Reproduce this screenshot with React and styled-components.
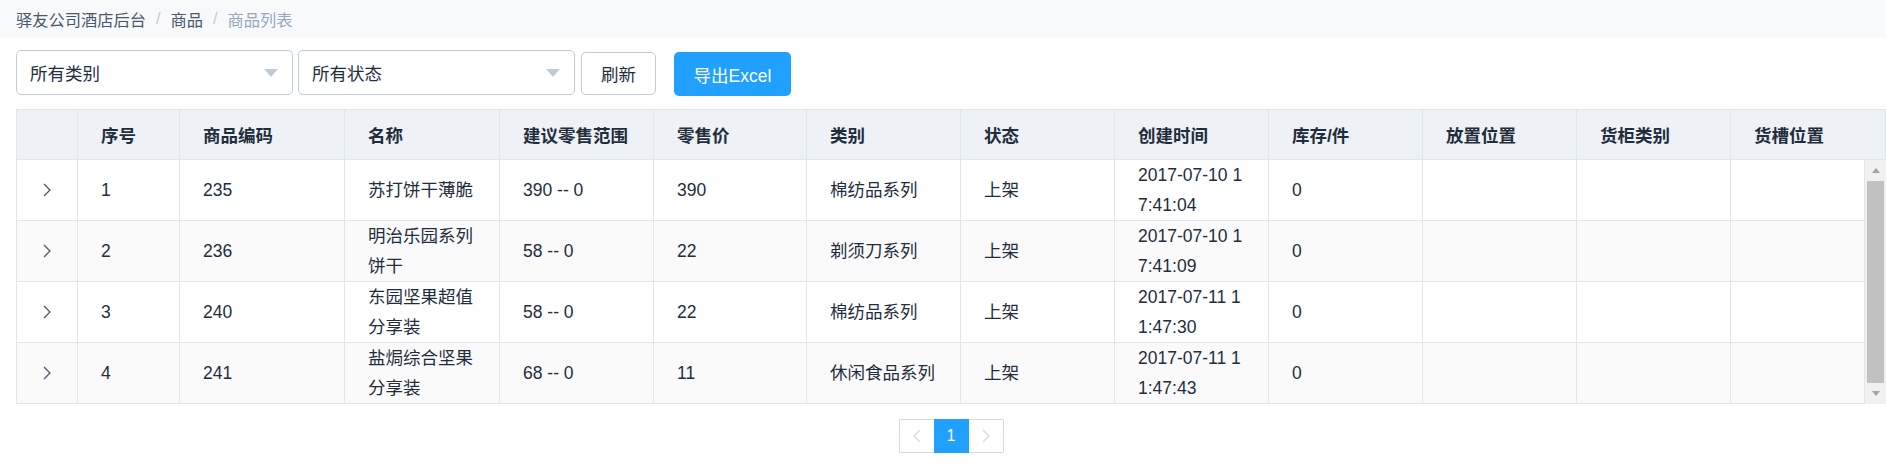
import React from "react";
import styled, { createGlobalStyle } from "styled-components";

const GlobalStyle = createGlobalStyle`
  html, body {
    margin: 0;
    padding: 0;
    background: #fff;
  }
  body {
    font-family: "Liberation Sans", "Noto Sans CJK SC", sans-serif;
    color: #1f2d3d;
  }
  * {
    box-sizing: border-box;
  }
`;

const COLUMNS = "61px 102px 165px 155px 154px 153px 154px 154px 154px 154px 154px 154px 1fr";

const headers = [
  "",
  "序号",
  "商品编码",
  "名称",
  "建议零售范围",
  "零售价",
  "类别",
  "状态",
  "创建时间",
  "库存/件",
  "放置位置",
  "货柜类别",
  "货槽位置",
];

const rows = [
  ["1", "235", "苏打饼干薄脆", "390 -- 0", "390", "棉纺品系列", "上架", "2017-07-10 17:41:04", "0"],
  ["2", "236", "明治乐园系列饼干", "58 -- 0", "22", "剃须刀系列", "上架", "2017-07-10 17:41:09", "0"],
  ["3", "240", "东园坚果超值分享装", "58 -- 0", "22", "棉纺品系列", "上架", "2017-07-11 11:47:30", "0"],
  ["4", "241", "盐焗综合坚果分享装", "68 -- 0", "11", "休闲食品系列", "上架", "2017-07-11 11:47:43", "0"],
];

const Chevron = ({ left, color = "#48576a" }) => (
  <svg width="8" height="14" viewBox="0 0 8 14">
    <polyline
      points={left ? "7,1 1,7 7,13" : "1,1 7,7 1,13"}
      fill="none"
      stroke={color}
      strokeWidth="1.3"
    />
  </svg>
);

const App = () => {
  return (
    <>
      <GlobalStyle />
      <Breadcrumb>
        <Crumb>驿友公司酒店后台</Crumb>
        <Separator>/</Separator>
        <Crumb>商品</Crumb>
        <Separator>/</Separator>
        <Crumb $last>商品列表</Crumb>
      </Breadcrumb>

      <Content>
        <Toolbar>
          <Select>
            <span>所有类别</span>
            <Caret />
          </Select>
          <Select>
            <span>所有状态</span>
            <Caret />
          </Select>
          <Button>刷新</Button>
          <PrimaryButton>导出Excel</PrimaryButton>
        </Toolbar>

        <Table>
          <HeaderRow>
            {headers.map((h, i) => (
              <HeadCell key={i}>{h}</HeadCell>
            ))}
          </HeaderRow>
          <BodyWrap>
            <Rows>
              {rows.map((r, i) => (
                <Row key={i} $striped={i % 2 === 1}>
                  <Cell $center>
                    <Chevron />
                  </Cell>
                  {r.map((c, j) => (
                    <Cell key={j}>{c}</Cell>
                  ))}
                  <Cell />
                  <Cell />
                  <Cell />
                </Row>
              ))}
            </Rows>
            <ScrollBar>
              <ScrollArrow>
                <ArrowUp />
              </ScrollArrow>
              <Thumb />
              <ScrollArrow>
                <ArrowDown />
              </ScrollArrow>
            </ScrollBar>
          </BodyWrap>
        </Table>

        <Pagination>
          <PageButton $disabled>
            <Chevron left color="#d1dbe5" />
          </PageButton>
          <PageButton $active>1</PageButton>
          <PageButton $disabled>
            <Chevron color="#d1dbe5" />
          </PageButton>
        </Pagination>
      </Content>
    </>
  );
};

const Breadcrumb = styled.div`
  height: 37px;
  background: #f8f9fb;
  display: flex;
  align-items: center;
  padding: 0 16px;
  font-size: 16.25px;
`;

const Crumb = styled.span`
  color: ${(p) => (p.$last ? "#97a8be" : "#48576a")};
`;

const Separator = styled.span`
  color: #bfcbd9;
  margin: 0 10px;
`;

const Content = styled.div`
  padding: 13px 0 0 16px;
`;

const Toolbar = styled.div`
  display: flex;
  align-items: flex-start;
  height: 45px;
`;

const Select = styled.div`
  width: 277px;
  height: 45px;
  border: 1px solid #bfcbd9;
  border-radius: 5px;
  display: flex;
  align-items: center;
  justify-content: space-between;
  padding: 0 14px 0 13px;
  font-size: 17.5px;
  color: #1f2d3d;
  background: #fff;
  & + & {
    margin-left: 5px;
  }
`;

const Caret = styled.span`
  width: 0;
  height: 0;
  border-left: 7px solid transparent;
  border-right: 7px solid transparent;
  border-top: 8px solid #bfcbd9;
`;

const Button = styled.div`
  margin: 2px 0 0 6px;
  width: 75px;
  height: 43px;
  border: 1px solid #bfcbd9;
  border-radius: 5px;
  display: flex;
  align-items: center;
  justify-content: center;
  font-size: 17.5px;
  color: #1f2d3d;
  background: #fff;
`;

const PrimaryButton = styled.div`
  margin: 2px 0 0 18px;
  width: 117px;
  height: 44px;
  border-radius: 5px;
  background: #20a0ff;
  color: #fff;
  display: flex;
  align-items: center;
  justify-content: center;
  font-size: 17.5px;
`;

const Table = styled.div`
  margin-top: 14px;
  border-left: 1px solid #dfe6ec;
  border-top: 1px solid #dfe6ec;
`;

const HeaderRow = styled.div`
  display: grid;
  grid-template-columns: ${COLUMNS};
  background: #eef1f6;
`;

const HeadCell = styled.div`
  height: 50px;
  border-right: 1px solid #dfe6ec;
  border-bottom: 1px solid #dfe6ec;
  display: flex;
  align-items: center;
  padding: 0 22px 0 23px;
  font-size: 17.5px;
  font-weight: bold;
  color: #1f2d3d;
  white-space: nowrap;
`;

const BodyWrap = styled.div`
  display: flex;
`;

const Rows = styled.div`
  flex: 1;
`;

const Row = styled.div`
  display: grid;
  grid-template-columns: ${COLUMNS};
  background: ${(p) => (p.$striped ? "#fafafa" : "#fff")};
`;

const Cell = styled.div`
  min-height: 61px;
  border-right: 1px solid #dfe6ec;
  border-bottom: 1px solid #dfe6ec;
  display: flex;
  align-items: center;
  justify-content: ${(p) => (p.$center ? "center" : "flex-start")};
  padding: ${(p) => (p.$center ? "0" : "0 22px 0 23px")};
  font-size: 17.5px;
  line-height: 30px;
  color: #1f2d3d;
  word-break: break-all;
`;

const ScrollBar = styled.div`
  width: 21px;
  background: #f1f1f1;
  display: flex;
  flex-direction: column;
`;

const ScrollArrow = styled.div`
  height: 21px;
  display: flex;
  align-items: center;
  justify-content: center;
`;

const ArrowUp = styled.span`
  width: 0;
  height: 0;
  border-left: 4.5px solid transparent;
  border-right: 4.5px solid transparent;
  border-bottom: 5px solid #a3a3a3;
`;

const ArrowDown = styled.span`
  width: 0;
  height: 0;
  border-left: 4.5px solid transparent;
  border-right: 4.5px solid transparent;
  border-top: 5px solid #a3a3a3;
`;

const Thumb = styled.div`
  flex: 1;
  margin: 0 2px;
  background: #c1c1c1;
`;

const Pagination = styled.div`
  display: flex;
  justify-content: center;
  margin-top: 15px;
`;

const PageButton = styled.div`
  width: 35px;
  height: 34px;
  display: flex;
  align-items: center;
  justify-content: center;
  font-size: 16px;
  background: ${(p) => (p.$active ? "#20a0ff" : "#fff")};
  color: ${(p) => (p.$active ? "#fff" : "#48576a")};
  border-top: 1px solid ${(p) => (p.$active ? "#20a0ff" : "#d1dbe5")};
  border-bottom: 1px solid ${(p) => (p.$active ? "#20a0ff" : "#d1dbe5")};
  &:first-child {
    border-left: 1px solid #d1dbe5;
    border-radius: 2px 0 0 2px;
  }
  &:last-child {
    border-right: 1px solid #d1dbe5;
    border-radius: 0 2px 2px 0;
  }
`;

export default App;
